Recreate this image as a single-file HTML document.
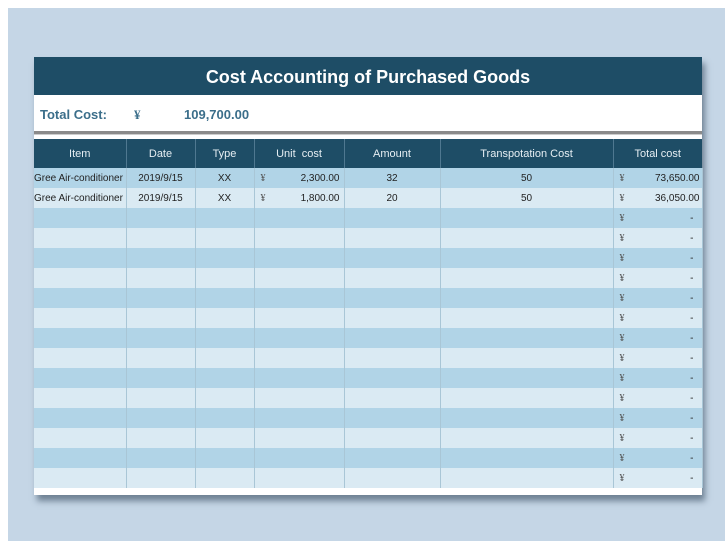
<!DOCTYPE html>
<html><head><style>
body{margin:0;width:725px;height:541px;background:#fff;position:relative;overflow:hidden;font-family:"Liberation Sans",Arial,sans-serif}
.bg{position:absolute;left:8px;top:8px;width:717px;height:533px;background:#c5d6e6}
.card{position:absolute;left:34px;top:57px;width:668px;height:438px;background:#fff;box-shadow:3px 6px 6px rgba(40,60,80,.55)}
.title{height:38px;background:#1e4d66;color:#fff;font-weight:bold;font-size:18px;text-align:center;line-height:41px}
.tot{height:36px;position:relative;color:#3b6e8a;font-weight:bold;font-size:13px}
.tot span{position:absolute;top:12px}
.sep{height:3px;background:#8a8a8a;margin-top:0;border-bottom:1px solid #ccc}
table{position:absolute;top:82px;left:0;border-collapse:collapse;width:668px;table-layout:fixed;font-size:10px;color:#222}
th{background:#1e4d66;color:#e6eef3;font-weight:normal;font-size:11px;height:29px;border-right:1px solid #4f7890;padding:0}
td{height:20px;padding:0;border-right:1px solid #a9c6d6;white-space:nowrap;text-align:center}
tr.a td{background:#b1d4e7}
tr.b td{background:#daeaf3}
.y{color:#555;font-size:10px;font-family:"Liberation Serif",serif}
</style></head><body>
<div class="bg"></div>
<div class="card">
<div class="title">Cost Accounting of Purchased Goods</div>
<div class="tot"><span style="left:6px">Total Cost:</span><span style="left:100px;font-family:'Liberation Serif',serif">¥</span><span style="left:150px">109,700.00</span></div>
<div class="sep"></div>
<table>
<colgroup><col style="width:92px"><col style="width:69px"><col style="width:59px"><col style="width:90px"><col style="width:96px"><col style="width:173px"><col style="width:89px"></colgroup>
<tr><th>Item</th><th>Date</th><th>Type</th><th>Unit &nbsp;cost</th><th>Amount</th><th>Transpotation Cost</th><th style="border-right:0">Total cost</th></tr>
<tr class="a"><td style="text-align:left">Gree Air-conditioner</td><td>2019/9/15</td><td>XX</td><td><span class="y" style="float:left;margin-left:6px">¥</span><span style="float:right;margin-right:4px">2,300.00</span></td><td>32</td><td>50</td><td><span class="y" style="float:left;margin-left:6px">¥</span><span style="float:right;margin-right:2px">73,650.00</span></td></tr>
<tr class="b"><td style="text-align:left">Gree Air-conditioner</td><td>2019/9/15</td><td>XX</td><td><span class="y" style="float:left;margin-left:6px">¥</span><span style="float:right;margin-right:4px">1,800.00</span></td><td>20</td><td>50</td><td><span class="y" style="float:left;margin-left:6px">¥</span><span style="float:right;margin-right:2px">36,050.00</span></td></tr>
<tr class="a"><td></td><td></td><td></td><td></td><td></td><td></td><td><span class="y" style="float:left;margin-left:6px">¥</span><span style="float:right;margin-right:8px">-</span></td></tr>
<tr class="b"><td></td><td></td><td></td><td></td><td></td><td></td><td><span class="y" style="float:left;margin-left:6px">¥</span><span style="float:right;margin-right:8px">-</span></td></tr>
<tr class="a"><td></td><td></td><td></td><td></td><td></td><td></td><td><span class="y" style="float:left;margin-left:6px">¥</span><span style="float:right;margin-right:8px">-</span></td></tr>
<tr class="b"><td></td><td></td><td></td><td></td><td></td><td></td><td><span class="y" style="float:left;margin-left:6px">¥</span><span style="float:right;margin-right:8px">-</span></td></tr>
<tr class="a"><td></td><td></td><td></td><td></td><td></td><td></td><td><span class="y" style="float:left;margin-left:6px">¥</span><span style="float:right;margin-right:8px">-</span></td></tr>
<tr class="b"><td></td><td></td><td></td><td></td><td></td><td></td><td><span class="y" style="float:left;margin-left:6px">¥</span><span style="float:right;margin-right:8px">-</span></td></tr>
<tr class="a"><td></td><td></td><td></td><td></td><td></td><td></td><td><span class="y" style="float:left;margin-left:6px">¥</span><span style="float:right;margin-right:8px">-</span></td></tr>
<tr class="b"><td></td><td></td><td></td><td></td><td></td><td></td><td><span class="y" style="float:left;margin-left:6px">¥</span><span style="float:right;margin-right:8px">-</span></td></tr>
<tr class="a"><td></td><td></td><td></td><td></td><td></td><td></td><td><span class="y" style="float:left;margin-left:6px">¥</span><span style="float:right;margin-right:8px">-</span></td></tr>
<tr class="b"><td></td><td></td><td></td><td></td><td></td><td></td><td><span class="y" style="float:left;margin-left:6px">¥</span><span style="float:right;margin-right:8px">-</span></td></tr>
<tr class="a"><td></td><td></td><td></td><td></td><td></td><td></td><td><span class="y" style="float:left;margin-left:6px">¥</span><span style="float:right;margin-right:8px">-</span></td></tr>
<tr class="b"><td></td><td></td><td></td><td></td><td></td><td></td><td><span class="y" style="float:left;margin-left:6px">¥</span><span style="float:right;margin-right:8px">-</span></td></tr>
<tr class="a"><td></td><td></td><td></td><td></td><td></td><td></td><td><span class="y" style="float:left;margin-left:6px">¥</span><span style="float:right;margin-right:8px">-</span></td></tr>
<tr class="b"><td></td><td></td><td></td><td></td><td></td><td></td><td><span class="y" style="float:left;margin-left:6px">¥</span><span style="float:right;margin-right:8px">-</span></td></tr>
</table>
</div>
</body></html>
